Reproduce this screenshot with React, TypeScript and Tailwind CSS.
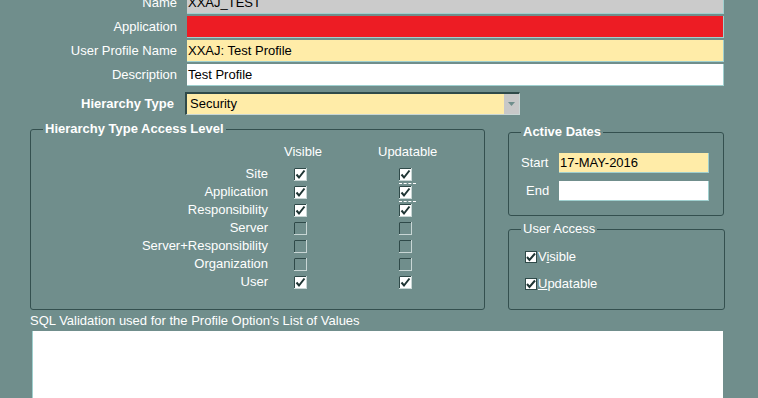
import React from 'react'

const font = { fontFamily: '"Liberation Sans", Arial, sans-serif' }

function Check({ checked }: { checked: boolean }) {
  return (
    <svg width="13" height="13" viewBox="0 0 13 13" className="block">
      <rect x="0.5" y="0.5" width="12" height="12" fill={checked ? '#ffffff' : 'none'} stroke="#c8d6d5" />
      <path d="M0.5 12V0.5H12" fill="none" stroke="#2f4a49" />
      {checked && <path d="M2.5 6.5L5 9.5L10.5 2.5" fill="none" stroke="#1f3534" strokeWidth="2" />}
    </svg>
  )
}

function SmallCheck() {
  return (
    <svg width="12" height="12" viewBox="0 0 12 12" className="block">
      <rect x="0.5" y="0.5" width="11" height="11" fill="#ffffff" stroke="#2f4a49" />
      <path d="M2 6L4.5 9L10 2.5" fill="none" stroke="#1f3534" strokeWidth="2" />
    </svg>
  )
}

function FieldRow({ label, value, bg }: { label: string; value?: string; bg: string }) {
  return (
    <div className="flex items-center h-[24px]">
      <div className="w-[177px] text-right text-white text-[13px] leading-[16px]">{label}</div>
      <div
        className={`ml-[10px] w-[537px] h-[22px] ${bg} border-r border-b border-[#9fd0cf] flex items-center pl-[1px] text-[13px] text-black`}
      >
        {value}
      </div>
    </div>
  )
}

const rows = [
  { label: 'Site', v: true, u: true, focus: true },
  { label: 'Application', v: true, u: true, focus: true },
  { label: 'Responsibility', v: true, u: true },
  { label: 'Server', v: false, u: false },
  { label: 'Server+Responsibility', v: false, u: false },
  { label: 'Organization', v: false, u: false },
  { label: 'User', v: true, u: true },
]

export default function App() {
  return (
    <div className="w-[758px] h-[398px] overflow-hidden bg-[#708e8c] leading-[16px]" style={font}>
      <div className="-mt-[9px]">
        <FieldRow label="Name" value="XXAJ_TEST" bg="bg-[#cbcbcb]" />
        <FieldRow label="Application" bg="bg-[#ed1c24]" />
        <FieldRow label="User Profile Name" value="XXAJ: Test Profile" bg="bg-[#ffeca8]" />
        <FieldRow label="Description" value="Test Profile" bg="bg-white" />

        {/* Hierarchy Type combo */}
        <div className="flex items-center h-[23px] mt-[5px]">
          <div className="w-[174px] text-right text-white text-[13px] font-bold">Hierarchy Type</div>
          <div className="ml-[11px] w-[335px] h-[23px] flex border-t-2 border-l-2 border-[#2f4a49] border-r border-b border-r-[#c8d6d5] border-b-[#c8d6d5]">
            <div className="flex-1 bg-[#ffeca8] flex items-center pl-[3px] text-[13px] text-black">Security</div>
            <div className="w-[15px] bg-[#c8c8c8] flex items-center justify-center">
              <svg width="7" height="4" viewBox="0 0 7 4">
                <path d="M0 0H7L3.5 4Z" fill="#6f8e8c" />
              </svg>
            </div>
          </div>
        </div>
      </div>

      <div className="flex mt-[10px] ml-[30px]">
        {/* Left group */}
        <fieldset className="w-[455px] h-[188px] border border-[#34504f] rounded-[3px] -mt-[3px]">
          <legend className="ml-[12px] px-[2px] text-white text-[13px] font-bold leading-[14px]">Hierarchy Type Access Level</legend>
          <div className="flex h-[18px] mt-[7px] text-white text-[13px] items-center">
            <div className="w-[253px]" />
            <div className="w-[94px]">Visible</div>
            <div>Updatable</div>
          </div>
          <div className="mt-[4px]">
            {rows.map((r) => (
              <div key={r.label} className="flex h-[18px] items-center text-white text-[13px]">
                <div className="w-[237px] text-right">{r.label}</div>
                <div className="ml-[26px] w-[13px]">
                  <Check checked={r.v} />
                </div>
                <div className="ml-[92px] relative">
                  <Check checked={r.u} />
                  {r.focus && (
                    <div className="absolute left-0 top-[15px] w-[17px] border-t border-dashed border-white" />
                  )}
                </div>
              </div>
            ))}
          </div>
        </fieldset>

        <div className="ml-[23px] flex flex-col">
          <fieldset className="w-[216px] h-[91px] border border-[#34504f] rounded-[3px]">
            <legend className="ml-[12px] px-[2px] text-white text-[13px] font-bold leading-[14px]">Active Dates</legend>
            <div className="flex items-center mt-[14px] h-[20px]">
              <div className="w-[50px] pl-[12px] text-white text-[13px]">Start</div>
              <div className="w-[150px] h-[20px] bg-[#ffeca8] border-r border-b border-[#9fd0cf] flex items-center pl-[1px] text-[13px] text-black">
                17-MAY-2016
              </div>
            </div>
            <div className="flex items-center mt-[8px] h-[20px]">
              <div className="w-[50px] pl-[17px] text-white text-[13px]">End</div>
              <div className="w-[150px] h-[20px] bg-white border-r border-b border-[#9fd0cf]" />
            </div>
          </fieldset>

          <fieldset className="w-[217px] h-[88px] border border-[#34504f] rounded-[3px] mt-[6px]">
            <legend className="ml-[12px] px-[2px] text-white text-[13px] leading-[14px]">User Access</legend>
            <div className="flex items-center mt-[13px] ml-[16px] h-[16px] text-white text-[13px]">
              <SmallCheck />
              <span className="ml-[1px]">
                V<span className="underline">i</span>sible
              </span>
            </div>
            <div className="flex items-center mt-[11px] ml-[16px] h-[16px] text-white text-[13px]">
              <SmallCheck />
              <span className="ml-[1px]">
                <span className="underline">U</span>pdatable
              </span>
            </div>
          </fieldset>
        </div>
      </div>

      <div className="ml-[30px] mt-[4px] text-white text-[13px] leading-[14px]">
        SQL Validation used for the Profile Option's List of Values
      </div>
      <div className="ml-[32px] mt-[3px] w-[691px] h-[80px] bg-white border-l border-[#9fd0cf]" />
    </div>
  )
}
